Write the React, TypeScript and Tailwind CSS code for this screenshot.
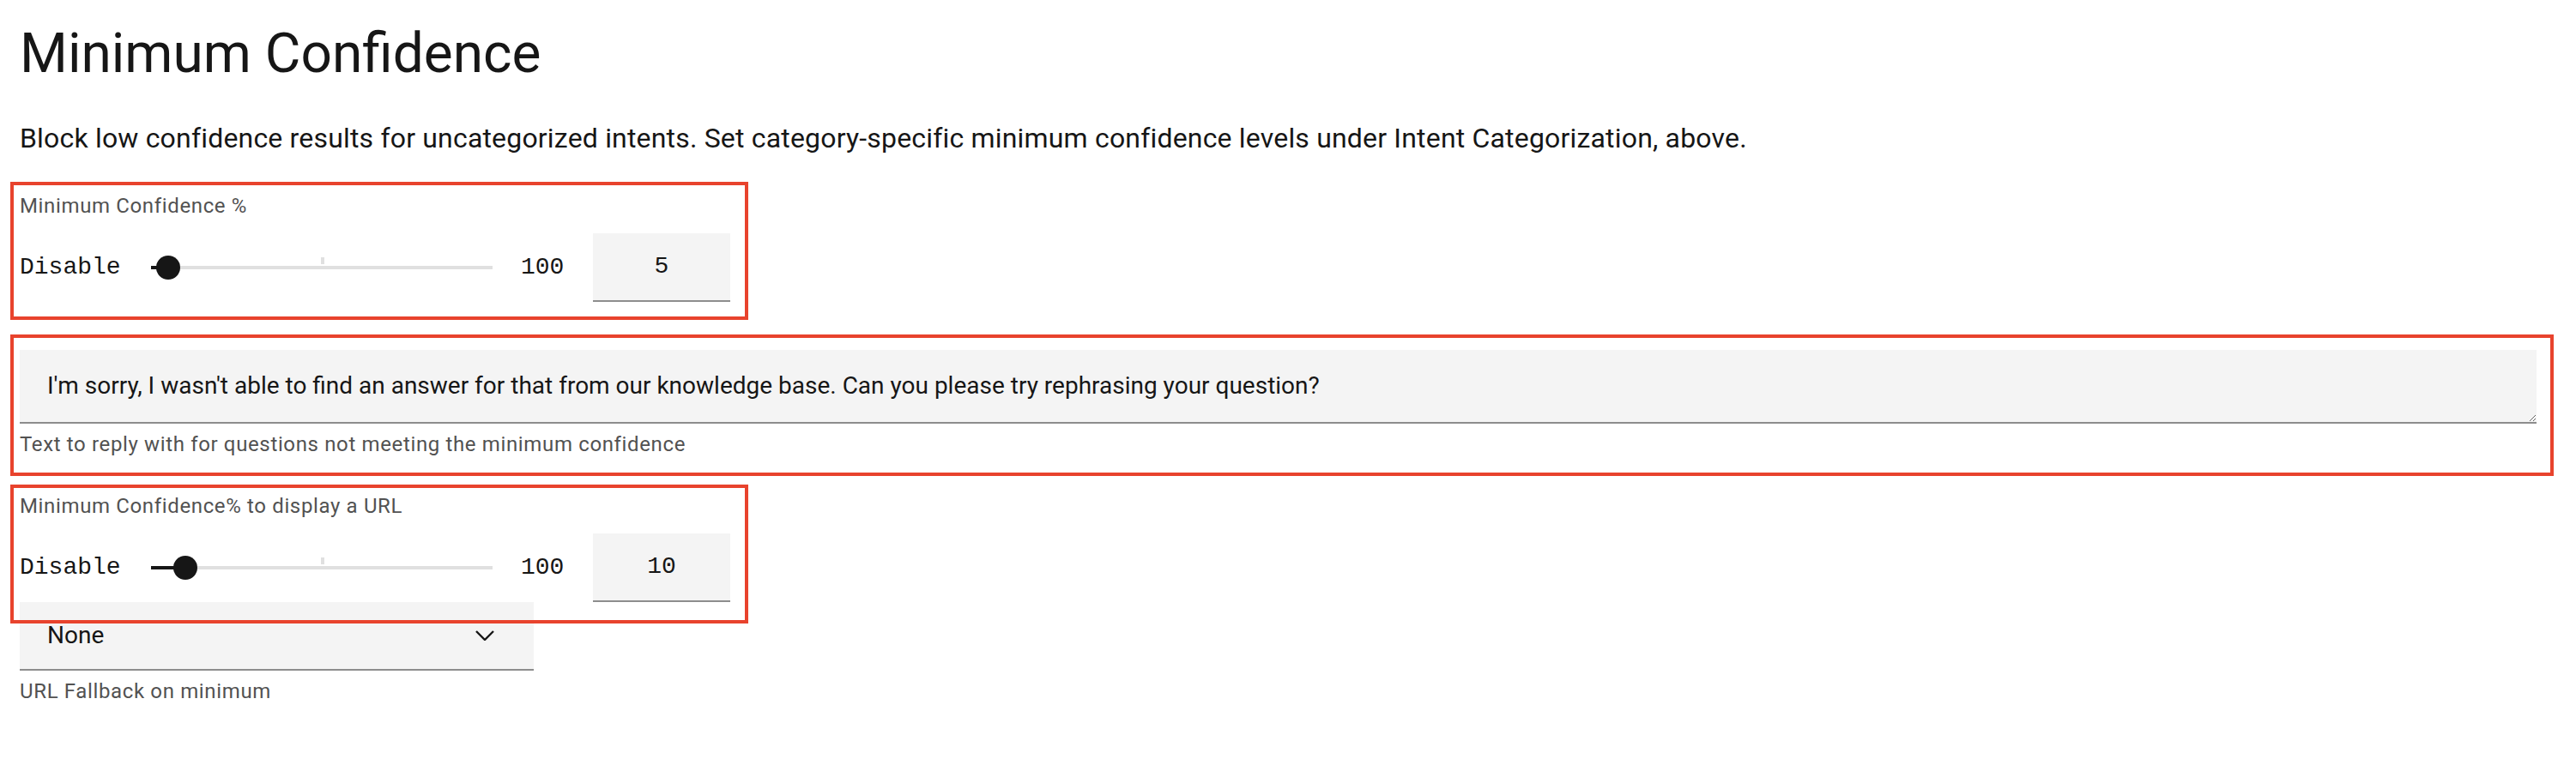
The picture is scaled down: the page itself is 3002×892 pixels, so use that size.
import React from 'react';

const sans = { fontFamily: 'Roboto, "Noto Sans", sans-serif' };

type SliderProps = {
  value: number;
};

// slider row: "Disable" label, track, max label, number box
function SliderRow({ value }: SliderProps) {
  const pct = value;
  return (
    <div className="flex h-[80px] items-center font-['Liberation_Mono',monospace] text-[28px] text-[#161616]">
      <span className="w-[121px] shrink-0">Disable</span>
      <div className="relative ml-[32px] h-[4px] w-[398px] shrink-0 bg-[#e0e0e0]">
        <div className="absolute left-[198px] -top-[10px] h-[8px] w-[4px] bg-[#e0e0e0]" />
        <div className="absolute left-0 top-0 h-[4px] bg-[#161616]" style={{ width: `${pct}%` }} />
        <div
          className="absolute -top-[12px] h-[28px] w-[28px] -translate-x-1/2 rounded-full bg-[#161616]"
          style={{ left: `${pct}%` }}
        />
      </div>
      <span className="ml-[33px] w-[52px] shrink-0">100</span>
      <div className="ml-[32px] flex h-[80px] w-[160px] shrink-0 items-center justify-center border-b-2 border-[#8d8d8d] bg-[#f4f4f4]">
        {value}
      </div>
    </div>
  );
}

function RedBox({ className }: { className: string }) {
  return <div className={`pointer-events-none absolute border-4 border-[#e8432d] ${className}`} />;
}

export default function App() {
  return (
    <div className="min-h-[892px] w-[3002px] bg-white pl-[23px] pr-[46px] pt-[23px] text-[#161616]" style={sans}>
      <h1 className="text-[64px] leading-[80px] font-normal">Minimum Confidence</h1>
      <p className="mt-[34px] text-[32px] leading-[48px] tracking-[0.18px]">
        Block low confidence results for uncategorized intents. Set category-specific minimum confidence levels under Intent Categorization, above.
      </p>

      {/* Minimum confidence */}
      <div className="relative mt-[39px]">
        <div className="text-[24px] leading-[32px] tracking-[0.64px] text-[#525252]">Minimum Confidence %</div>
        <div className="mt-[16px]">
          <SliderRow value={5} />
        </div>
        <RedBox className="-left-[11px] -top-[12px] -bottom-[21px] w-[860px]" />
      </div>

      {/* Fallback text */}
      <div className="relative mt-[56px]">
        <textarea
          readOnly
          defaultValue="I'm sorry, I wasn't able to find an answer for that from our knowledge base. Can you please try rephrasing your question?"
          className="block h-[86px] w-full border-b-2 border-[#8d8d8d] bg-[#f4f4f4] px-[32px] py-[22px] text-[28px] leading-[40px] text-[#161616] outline-none"
          style={sans}
        />
        <div className="mt-[8px] text-[24px] leading-[32px] tracking-[0.64px] text-[#525252]">
          Text to reply with for questions not meeting the minimum confidence
        </div>
        <RedBox className="-left-[11px] -top-[18px] -bottom-[21px] -right-[20px]" />
      </div>

      {/* URL confidence */}
      <div className="relative mt-[40px]">
        <div className="text-[24px] leading-[32px] tracking-[0.64px] text-[#525252]">Minimum Confidence% to display a URL</div>
        <div className="mt-[16px]">
          <SliderRow value={10} />
        </div>
        <RedBox className="-left-[11px] -top-[9px] -bottom-[25px] w-[860px]" />
      </div>

      <div className="flex h-[80px] w-[599px] items-center justify-between border-b-2 border-[#8d8d8d] bg-[#f4f4f4] pl-[32px] pr-[46px] text-[28px]">
        <span>None</span>
        <svg width="22" height="12" viewBox="0 0 22 12" fill="none">
          <path d="M1 1l10 10L21 1" stroke="#161616" strokeWidth="2.4" />
        </svg>
      </div>
      <div className="mt-[8px] text-[24px] leading-[32px] tracking-[0.64px] text-[#525252]">URL Fallback on minimum</div>
    </div>
  );
}
